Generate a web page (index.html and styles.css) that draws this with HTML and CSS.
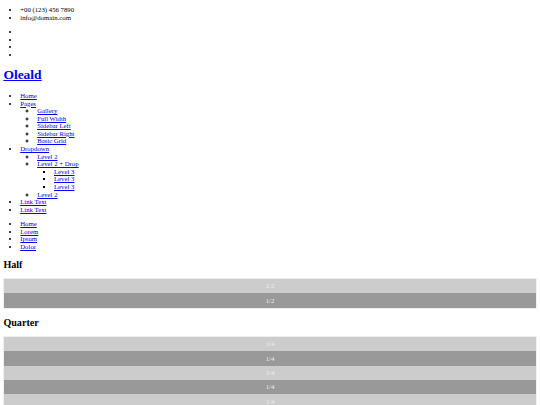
FILE: index.html
```html
<!DOCTYPE html>
<html lang="en">
<head>
<meta charset="utf-8">
<title>Oleald</title>
<link rel="stylesheet" href="styles.css">
</head>
<body class="page">
<header class="site-header">
  <ul class="list first">
    <li>+00 (123) 456 7890</li>
    <li>info@domain.com</li>
  </ul>
  <ul class="list">
    <li><a href="#"></a></li>
    <li><a href="#"></a></li>
    <li><a href="#"></a></li>
    <li><a href="#"></a></li>
  </ul>
  <h1 class="logo"><a href="#">Oleald</a></h1>
  <nav>
    <ul class="list">
      <li><a href="#">Home</a></li>
      <li><a href="#">Pages</a>
        <ul class="sub">
          <li><a href="#">Gallery</a></li>
          <li><a href="#">Full Width</a></li>
          <li><a href="#">Sidebar Left</a></li>
          <li><a href="#">Sidebar Right</a></li>
          <li><a href="#">Basic Grid</a></li>
        </ul>
      </li>
      <li><a href="#">Dropdown</a>
        <ul class="sub">
          <li><a href="#">Level 2</a></li>
          <li><a href="#">Level 2 + Drop</a>
            <ul class="sub">
              <li><a href="#">Level 3</a></li>
              <li><a href="#">Level 3</a></li>
              <li><a href="#">Level 3</a></li>
            </ul>
          </li>
          <li><a href="#">Level 2</a></li>
        </ul>
      </li>
      <li><a href="#">Link Text</a></li>
      <li><a href="#">Link Text</a></li>
    </ul>
  </nav>
</header>
<ul class="list">
  <li><a href="#">Home</a></li>
  <li><a href="#">Lorem</a></li>
  <li><a href="#">Ipsum</a></li>
  <li><a href="#">Dolor</a></li>
</ul>
<main>
  <h2 class="title">Half</h2>
  <div class="group">
    <div class="cell light">1/2</div>
    <div class="cell dark">1/2</div>
  </div>
  <h2 class="title">Quarter</h2>
  <div class="group">
    <div class="cell light">1/4</div>
    <div class="cell dark">1/4</div>
    <div class="cell light">1/4</div>
    <div class="cell dark">1/4</div>
    <div class="cell light">1/4</div>
    <div class="cell dark">1/4</div>
  </div>
</main>
</body>
</html>
```
FILE: styles.css
```css
.page {
  margin: 0 3.375px 3.375px;
  font-family: "Liberation Serif", "Times New Roman", serif;
  font-size: 6.75px;
  line-height: 7.6px;
  color: #000;
}
.list {
  margin: 6.75px 0;
  padding-left: 16.875px;
}
.list.first {
  margin-top: 6px;
  padding-top: 0.1px;
}
.sub {
  margin: 0;
  padding-left: 16.875px;
}
.logo {
  font-size: 13.5px;
  line-height: 15.5px;
  margin: 9px 0;
}
.title {
  font-size: 10.125px;
  line-height: 11px;
  margin: 8.5px 0 7.8px;
}
.group {
  border: 0.85px solid #eeeeee;
}
.cell {
  text-align: center;
  color: #eeeeee;
  padding: 3.375px 0;
  line-height: 7.6px;
}
.light {
  background: #cccccc;
}
.dark {
  background: #999999;
}
```
